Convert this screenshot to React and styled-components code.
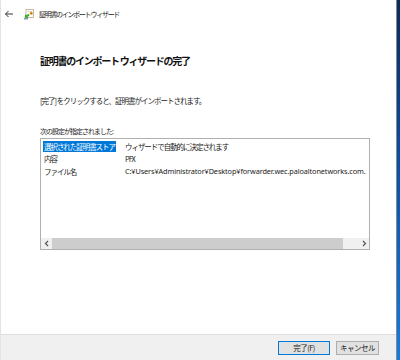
import React from "react";
import styled, { createGlobalStyle } from "styled-components";

const Global = createGlobalStyle`
  html, body { margin: 0; padding: 0; background: #fff; }
  body { font-family: "Noto Sans CJK JP", "Noto Sans", sans-serif; }
  * { box-sizing: border-box; }
`;

const Screen = styled.div`
  width: 400px;
  height: 360px;
  display: flex;
  overflow: hidden;
`;

const Window = styled.div`
  width: 397px;
  height: 360px;
  display: flex;
  flex-direction: column;
  background: #fff;
  border-right: 1px solid #8a8a8a;
  border-left: 1px solid #e4e4e4;
`;

const Desktop = styled.div`
  flex: 1;
  background: linear-gradient(#0b2a5a, #0a4aa0 40%, #0f7ee6 100%);
`;

const TitleBar = styled.div`
  height: 28px;
  display: flex;
  align-items: center;
  padding-left: 3px;
  font-size: 7px;
  color: #1a1a1a;
  white-space: nowrap;
`;

const Back = styled.span`
  width: 10px;
  display: inline-flex;
  margin-right: 9px;
`;

const TitleText = styled.span`
  margin-left: 5px;
  letter-spacing: -1.3px;
`;

const Content = styled.div`
  flex: 1;
  padding-left: 39px;
  display: flex;
  flex-direction: column;
`;

const Heading = styled.h1`
  margin: 25px 0 0 0;
  font-size: 10px;
  line-height: 16px;
  font-weight: 700;
  letter-spacing: -1.25px;
  color: #111;
  white-space: nowrap;
`;

const Para = styled.p`
  margin: ${(p) => p.$top}px 0 0 0;
  font-size: ${(p) => p.$size}px;
  letter-spacing: ${(p) => p.$ls}px;
  line-height: 12px;
  color: #1a1a1a;
  white-space: nowrap;
`;

const ListBox = styled.div`
  margin-top: 1px;
  width: 330px;
  height: 112px;
  border: 1px solid #b0b0b0;
  display: flex;
  flex-direction: column;
  justify-content: space-between;
  padding-top: 1px;
`;

const Rows = styled.div`
  display: flex;
  flex-direction: column;
  padding-left: 2px;
`;

const Row = styled.div`
  height: 12.5px;
  display: grid;
  grid-template-columns: 81px 1fr;
  align-items: center;
  font-size: 7.5px;
  letter-spacing: -1.05px;
  color: #1a1a1a;
  white-space: nowrap;
  overflow: hidden;
`;

const Cell = styled.span`
  justify-self: start;
  padding: 0 1.5px 0 1px;
  line-height: 11px;
  background: ${(p) => (p.$selected ? "#0078d7" : "transparent")};
  color: ${(p) => (p.$selected ? "#fff" : "inherit")};
`;

const PathCell = styled(Cell)`
  font-family: "Noto Sans", sans-serif;
  font-size: 7.3px;
  letter-spacing: -0.1px;
`;

const ScrollBar = styled.div`
  height: 11px;
  background: #f0f0f0;
  display: flex;
  align-items: center;
`;

const Arrow = styled.span`
  width: 11px;
  height: 11px;
  display: inline-flex;
  align-items: center;
  justify-content: center;
`;

const Thumb = styled.div`
  width: 291px;
  height: 11px;
  background: #cdcdcd;
  margin-right: auto;
`;

const Footer = styled.div`
  height: 26px;
  background: #f0f0f0;
  border-top: 1px solid #dfdfdf;
  display: flex;
  justify-content: flex-end;
  align-items: center;
  gap: 6px;
  padding: 0 17px 0 0;
`;

const Button = styled.button`
  width: ${(p) => p.$w}px;
  height: 14px;
  padding: 0;
  font-family: "Noto Sans CJK JP", "Noto Sans", sans-serif;
  font-size: 7.5px;
  letter-spacing: -0.5px;
  line-height: 12px;
  color: #1a1a1a;
  background: #e1e1e1;
  border: 1px solid ${(p) => (p.$default ? "#0078d7" : "#adadad")};
`;

const CertIcon = () => (
  <svg width="11" height="11" viewBox="0 0 11 11">
    <rect x="3" y="0.5" width="7.5" height="8" fill="#fff" stroke="#b8a98a" strokeWidth="0.8" />
    <line x1="4.5" y1="2.5" x2="9" y2="2.5" stroke="#c8c8c8" strokeWidth="0.8" />
    <circle cx="8.3" cy="4.3" r="1.6" fill="#e8b020" />
    <circle cx="8.3" cy="4.3" r="0.7" fill="#d04020" />
    <path d="M1 7 L4 4.5 L4 6 L6.5 6 L6.5 8 L4 8 L4 9.5 Z" fill="#3aaa35" transform="rotate(-35 4 7)" />
    <rect x="1" y="9" width="4" height="1.5" fill="#8a9bb0" />
  </svg>
);

const BackArrow = () => (
  <svg width="10" height="10" viewBox="0 0 10 10">
    <path d="M9 5 H1.5 M4.5 2 L1.5 5 L4.5 8" fill="none" stroke="#333" strokeWidth="1" />
  </svg>
);

const Chevron = ({ dir }) => (
  <svg width="6" height="7" viewBox="0 0 6 7">
    <path
      d={dir === "left" ? "M4 1 L1.5 3.5 L4 6" : "M2 1 L4.5 3.5 L2 6"}
      fill="none"
      stroke="#555"
      strokeWidth="1.2"
    />
  </svg>
);

export default function App() {
  return (
    <>
      <Global />
      <Screen>
        <Window>
          <TitleBar>
            <Back>
              <BackArrow />
            </Back>
            <CertIcon />
            <TitleText>証明書のインポート ウィザード</TitleText>
          </TitleBar>
          <Content>
            <Heading>証明書のインポート ウィザードの完了</Heading>
            <Para $top={26} $size={7.5} $ls={-1}>
              [完了] をクリックすると、証明書がインポートされます。
            </Para>
            <Para $top={18} $size={7} $ls={-1}>
              次の設定が指定されました:
            </Para>
            <ListBox>
              <Rows>
                <Row>
                  <Cell $selected>選択された証明書ストア</Cell>
                  <Cell>ウィザードで自動的に決定されます</Cell>
                </Row>
                <Row>
                  <Cell>内容</Cell>
                  <Cell>PFX</Cell>
                </Row>
                <Row>
                  <Cell>ファイル名</Cell>
                  <PathCell>C:¥Users¥Administrator¥Desktop¥forwarder.wec.paloaltonetworks.com.</PathCell>
                </Row>
              </Rows>
              <ScrollBar>
                <Arrow>
                  <Chevron dir="left" />
                </Arrow>
                <Thumb />
                <Arrow>
                  <Chevron dir="right" />
                </Arrow>
              </ScrollBar>
            </ListBox>
          </Content>
          <Footer>
            <Button $w={52} $default>完了(F)</Button>
            <Button $w={43}>キャンセル</Button>
          </Footer>
        </Window>
        <Desktop />
      </Screen>
    </>
  );
}
